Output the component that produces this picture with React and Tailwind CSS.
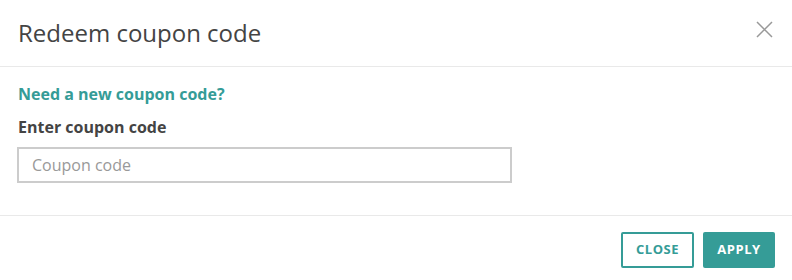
import React, { useState } from "react"

export default function App() {
    const [code, setCode] = useState("")

    return (
      <div className="w-[792px] h-[280px] bg-white text-[#444]" style={{ fontFamily: '"Open Sans", "Liberation Sans", sans-serif' }}>
        {/* header */}
        <div className="flex items-center justify-between h-[67px] pl-[18px] pr-[19px] border-b border-[#e9e9e9]">
          <h2 className="text-[24px] font-normal text-[#444] leading-none">Redeem coupon code</h2>
          <button className="self-start mt-[21px] text-[#999]" aria-label="Close">
            <svg className="block" width="17" height="17" viewBox="0 0 17 17" stroke="currentColor" strokeWidth="1.5">
              <path d="M1 1L16 16M16 1L1 16" />
            </svg>
          </button>
        </div>

        {/* body */}
        <div className="px-[18px] pt-[16px] h-[149px] border-b border-[#e9e9e9]">
          <a href="#" className="block text-[16px] font-bold text-[#359c97] leading-[22px]">Need a new coupon code?</a>
          <label className="block mt-[11px] text-[16px] font-bold text-[#444] leading-[22px]">Enter coupon code</label>
          <input
            value={code}
            onChange={e => setCode(e.target.value)}
            placeholder="Coupon code"
            className="mt-[9px] w-[495px] h-[36px] -ml-px px-[13px] border-2 border-[#ccc] text-[16px] text-[#444] placeholder:text-[#999] outline-none"
          />
        </div>

        {/* footer */}
        <div className="flex justify-end gap-[9px] pt-[16px] pr-[17px]">
          <button className="h-[36px] w-[73px] border-2 border-[#359c97] rounded-[2px] text-[13px] font-bold tracking-[0.5px] text-[#359c97]">CLOSE</button>
          <button className="h-[36px] w-[72px] bg-[#359c97] rounded-[2px] text-[13px] font-bold tracking-[0.5px] text-white">APPLY</button>
        </div>
      </div>
    )
}
